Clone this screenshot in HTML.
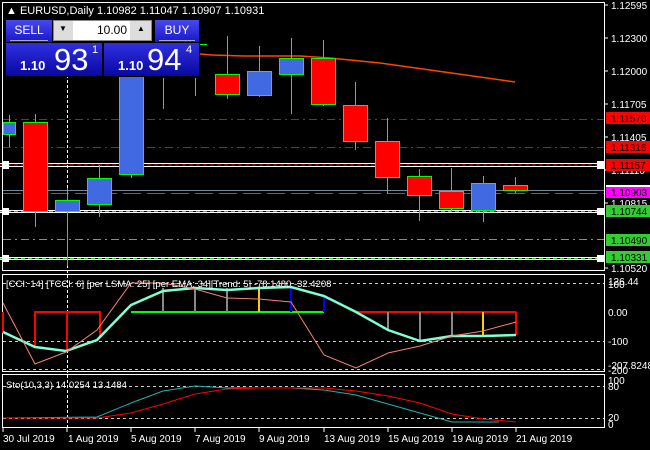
<!DOCTYPE html>
<html><head><meta charset="utf-8"><style>
body{margin:0;background:#000;width:650px;height:450px;overflow:hidden;font-family:"Liberation Sans",sans-serif}
svg{position:absolute;left:0;top:0}
text{font-family:"Liberation Sans",sans-serif;font-size:10px;fill:#fff}
.btn{position:absolute;background:linear-gradient(#4848f0,#1818c8);color:#fff;font-family:"Liberation Sans",sans-serif;border:1px solid #000}
</style></head><body>
<svg width="650" height="450" viewBox="0 0 650 450">
<!-- frames -->
<rect x="2.5" y="2.5" width="602" height="268" fill="none" stroke="#fff"/>
<rect x="2.5" y="274.5" width="602" height="97" fill="none" stroke="#fff"/>
<rect x="2.5" y="374.5" width="602" height="53" fill="none" stroke="#fff"/>
<!-- horizontal levels main -->
<g stroke-width="1">
<line x1="3" y1="119.5" x2="604" y2="119.5" stroke="#e00" stroke-dasharray="8,4,2,4"/>
<line x1="3" y1="147.5" x2="604" y2="147.5" stroke="#e00" stroke-dasharray="8,4,2,4"/>
<line x1="0" y1="163.5" x2="604" y2="163.5" stroke="#fff"/>
<line x1="0" y1="165" x2="604" y2="165" stroke="#e00" stroke-dasharray="4,3"/>
<line x1="0" y1="166.5" x2="604" y2="166.5" stroke="#fff"/>
<line x1="3" y1="190.5" x2="604" y2="190.5" stroke="#778899"/>
<line x1="3" y1="193.5" x2="604" y2="193.5" stroke="#e0e" stroke-dasharray="18,6"/>
<line x1="0" y1="210.5" x2="604" y2="210.5" stroke="#fff"/>
<line x1="0" y1="211.5" x2="604" y2="211.5" stroke="#3c3" stroke-dasharray="4,3"/>
<line x1="0" y1="212.5" x2="604" y2="212.5" stroke="#fff"/>
<line x1="3" y1="239.5" x2="604" y2="239.5" stroke="#3c3" stroke-dasharray="8,4,2,4"/>
<line x1="0" y1="257.5" x2="604" y2="257.5" stroke="#fff"/>
<line x1="0" y1="258.5" x2="604" y2="258.5" stroke="#3c3" stroke-dasharray="4,3"/>
<line x1="0" y1="259.5" x2="604" y2="259.5" stroke="#fff"/>
</g>
<g fill="#fff"><rect x="2" y="161" width="7" height="8"/><rect x="2" y="208" width="7" height="7"/><rect x="2" y="255" width="7" height="7"/>
<rect x="597" y="161" width="8" height="8"/><rect x="597" y="208" width="8" height="7"/><rect x="597" y="255" width="8" height="7"/></g>
<!-- vertical dashed -->
<line x1="67.5" y1="50" x2="67.5" y2="430" stroke="#fff" stroke-dasharray="3,2"/>
<!-- MA line -->
<polyline points="200,54 212,55 244,56 300,56 330,58 380,63 430,70 480,77 515,82" fill="none" stroke="#f40" stroke-width="1.5"/>
<!-- candles wicks -->
<g stroke="#0f0" stroke-width="1">
<line x1="9.5" y1="115" x2="9.5" y2="147"/><line x1="35.5" y1="114" x2="35.5" y2="227"/><line x1="67.5" y1="188" x2="67.5" y2="266"/>
<line x1="99.5" y1="165" x2="99.5" y2="217"/><line x1="131.5" y1="70" x2="131.5" y2="178"/><line x1="163.5" y1="78" x2="163.5" y2="109"/>
<line x1="195.5" y1="78" x2="195.5" y2="96"/><line x1="227.5" y1="36" x2="227.5" y2="99"/><line x1="259.5" y1="46" x2="259.5" y2="97"/>
<line x1="291.5" y1="38" x2="291.5" y2="114"/><line x1="323.5" y1="40" x2="323.5" y2="106"/><line x1="355.5" y1="82" x2="355.5" y2="150"/>
<line x1="387.5" y1="118" x2="387.5" y2="194"/><line x1="419.5" y1="169" x2="419.5" y2="221"/><line x1="451.5" y1="168" x2="451.5" y2="211"/>
<line x1="483.5" y1="176" x2="483.5" y2="222"/><line x1="515.5" y1="177" x2="515.5" y2="193"/>
<line x1="200" y1="44.5" x2="207" y2="44.5"/>
</g>
<g stroke="#0f0" stroke-width="1">
<rect x="3.5" y="122.5" width="12" height="12" fill="#4169e1"/>
<rect x="23.5" y="122.5" width="24" height="89" fill="#f00"/>
<rect x="55.5" y="200.5" width="24" height="11" fill="#4169e1"/>
<rect x="87.5" y="178.5" width="24" height="26" fill="#4169e1"/>
<rect x="119.5" y="70.5" width="24" height="104" fill="#4169e1"/>
<rect x="215.5" y="74.5" width="24" height="20" fill="#f00"/>
<rect x="247.5" y="71.5" width="24" height="24" fill="#4169e1"/>
<rect x="279.5" y="58.5" width="24" height="16" fill="#4169e1"/>
<rect x="311.5" y="58.5" width="24" height="46" fill="#f00"/>
<rect x="343.5" y="105.5" width="24" height="36" fill="#f00"/>
<rect x="375.5" y="141.5" width="24" height="36" fill="#f00"/>
<rect x="407.5" y="176.5" width="24" height="19" fill="#f00"/>
<rect x="439.5" y="191.5" width="24" height="17" fill="#f00"/>
<rect x="471.5" y="183.5" width="24" height="27" fill="#4169e1"/>
<rect x="503.5" y="185.5" width="24" height="5" fill="#f00"/>
</g>
<!-- price axis -->
<g stroke="#fff"><line x1="604" y1="5" x2="608" y2="5"/><line x1="604" y1="38" x2="608" y2="38"/><line x1="604" y1="71" x2="608" y2="71"/><line x1="604" y1="104" x2="608" y2="104"/><line x1="604" y1="137" x2="608" y2="137"/><line x1="604" y1="170" x2="608" y2="170"/><line x1="604" y1="203" x2="608" y2="203"/><line x1="604" y1="268" x2="608" y2="268"/></g>
<g><text x="611" y="9">1.12595</text><text x="611" y="42">1.12300</text><text x="611" y="75">1.12000</text><text x="611" y="108">1.11705</text><text x="611" y="141">1.11405</text><text x="611" y="174">1.11110</text><text x="611" y="207">1.10815</text><text x="611" y="272">1.10520</text></g>
<rect x="606" y="112" width="44" height="12" fill="#f00"/><text x="611" y="122" style="fill:#000">1.11570</text>
<rect x="606" y="141" width="44" height="12" fill="#f00"/><text x="611" y="151" style="fill:#000">1.11316</text>
<rect x="606" y="159" width="44" height="12" fill="#f00"/><text x="611" y="169" style="fill:#000">1.11157</text>
<rect x="606" y="185" width="44" height="2" fill="#fff"/>
<rect x="606" y="187" width="44" height="11" fill="#f0f"/><text x="611" y="196" style="fill:#000">1.10903</text>
<rect x="606" y="205" width="44" height="12" fill="#32cd32"/><text x="611" y="215" style="fill:#000">1.10744</text>
<rect x="606" y="234" width="44" height="12" fill="#32cd32"/><text x="611" y="244" style="fill:#000">1.10490</text>
<rect x="606" y="251" width="44" height="12" fill="#32cd32"/><text x="611" y="261" style="fill:#000">1.10331</text>
<!-- title -->
<text x="6" y="14" style="font-size:11px">▲ EURUSD,Daily  1.10982 1.11047 1.10907 1.10931</text>
<!-- CCI panel -->
<g stroke="#ccc" stroke-dasharray="3,3"><line x1="3" y1="283.5" x2="604" y2="283.5"/><line x1="3" y1="341.5" x2="604" y2="341.5"/><line x1="3" y1="369.5" x2="604" y2="369.5"/>
<line x1="3" y1="386.5" x2="604" y2="386.5"/><line x1="3" y1="418.5" x2="604" y2="418.5"/></g>
<g stroke-width="2" fill="none">
<polyline points="3,312 3,333" stroke="#f00"/>
<polyline points="35,346 35,312 100,312 100,337" stroke="#f00"/>
<line x1="67" y1="312" x2="67" y2="351" stroke="#f00"/>
<line x1="131" y1="312" x2="324" y2="312" stroke="#0f0"/>
<line x1="163" y1="288" x2="163" y2="312" stroke="#888"/><line x1="195" y1="287" x2="195" y2="312" stroke="#888"/><line x1="227" y1="288" x2="227" y2="312" stroke="#888"/>
<line x1="259" y1="287" x2="259" y2="312" stroke="#fc0"/><line x1="291" y1="288" x2="291" y2="312" stroke="#00f"/><line x1="324" y1="296" x2="324" y2="312" stroke="#00f"/>
<line x1="356" y1="312" x2="516" y2="312" stroke="#f00"/>
<line x1="388" y1="312" x2="388" y2="330" stroke="#888"/><line x1="420" y1="312" x2="420" y2="341" stroke="#888"/><line x1="452" y1="312" x2="452" y2="337" stroke="#888"/>
<line x1="483" y1="312" x2="483" y2="336" stroke="#fc0"/><line x1="516" y1="312" x2="516" y2="335" stroke="#f00"/>
<polyline points="3,332 35,347 66,351 97,340 131,305 163,291 195,288 227,290 259,288 291,287 324,296 356,312 388,330 420,341 452,336 483,336 516,335" stroke="#7fffd4" stroke-width="2.5"/>
<polyline points="3,303 35,364 66,352 97,330 131,283 163,283 195,289 227,298 259,299 291,302 324,355 356,368 388,353 420,346 452,336 483,331 516,322" stroke="#fa8072" stroke-width="1"/>
<!-- sto -->
<polyline points="3,418 97,417 131,403 163,391 195,386 227,388 259,388 291,388 324,390 356,395 388,404 420,413 452,422 483,422 499,422" stroke="#20b2aa" stroke-width="1"/>
<polyline points="3,418 97,418 131,413 163,404 195,394 227,389 259,388 291,388 324,388 356,391 388,396 420,403 452,414 483,419 516,422" stroke="#f00" stroke-width="1"/>
</g>
<text x="6" y="287" style="font-size:9.5px">[CCI: 14] [TCCI: 6] [per LSMA: 25] [per EMA: 34][Trend: 5] -78.1480 -32.4208</text>
<text x="6" y="388" style="font-size:9.5px">Sto(10,3,3) 14.0254 13.1484</text>
<g style="font-size:9.5px"><text x="608" y="285">126.44</text><text x="608" y="288">100</text><text x="608" y="316">0.00</text><text x="608" y="345">-100</text><text x="608" y="369">-207.8248</text><text x="608" y="374">-200</text>
<text x="608" y="384">100</text><text x="608" y="390">80</text><text x="608" y="421">20</text><text x="608" y="428">0</text></g>
<!-- dates -->
<g stroke="#fff"><line x1="3" y1="428" x2="3" y2="432"/><line x1="67" y1="428" x2="67" y2="432"/><line x1="131" y1="428" x2="131" y2="432"/><line x1="195" y1="428" x2="195" y2="432"/><line x1="259" y1="428" x2="259" y2="432"/><line x1="324" y1="428" x2="324" y2="432"/><line x1="388" y1="428" x2="388" y2="432"/><line x1="452" y1="428" x2="452" y2="432"/><line x1="516" y1="428" x2="516" y2="432"/></g>
<g><text x="3" y="442">30 Jul 2019</text><text x="68" y="442">1 Aug 2019</text><text x="131" y="442">5 Aug 2019</text><text x="195" y="442">7 Aug 2019</text><text x="259" y="442">9 Aug 2019</text><text x="324" y="442">13 Aug 2019</text><text x="388" y="442">15 Aug 2019</text><text x="452" y="442">19 Aug 2019</text><text x="516" y="442">21 Aug 2019</text></g>
</svg>
<!-- trade panel -->
<div class="btn" style="left:5px;top:19px;width:46px;height:22px;font-size:12px;text-align:center;line-height:21px">SELL<div style="position:absolute;left:4px;right:4px;bottom:1px;height:1px;background:#aab"></div></div>
<div style="position:absolute;left:53px;top:20px;width:99px;height:21px;background:#ddd;border:1px solid #888;box-sizing:border-box">
<div style="position:absolute;left:19px;top:0;width:57px;height:19px;background:#fff;font-size:12px;text-align:right;line-height:19px;padding-right:3px;box-sizing:border-box">10.00</div>
<div style="position:absolute;left:5px;top:3px;font-size:8px">▼</div><div style="position:absolute;left:83px;top:3px;font-size:8px">▲</div></div>
<div class="btn" style="left:154px;top:19px;width:44px;height:22px;font-size:12px;text-align:center;line-height:21px">BUY<div style="position:absolute;left:4px;right:4px;bottom:1px;height:1px;background:#aab"></div></div>
<div class="btn" style="left:5px;top:42px;width:96px;height:33px;background:linear-gradient(#3030e0,#0808a0)">
<span style="position:absolute;left:14px;top:15px;font-size:13px;font-weight:bold">1.10</span>
<span style="position:absolute;left:48px;top:-1px;font-size:31px">93</span>
<span style="position:absolute;left:86px;top:1px;font-size:11px">1</span></div>
<div class="btn" style="left:103px;top:42px;width:95px;height:33px;background:linear-gradient(#3030e0,#0808a0)">
<span style="position:absolute;left:14px;top:15px;font-size:13px;font-weight:bold">1.10</span>
<span style="position:absolute;left:43px;top:-1px;font-size:31px">94</span>
<span style="position:absolute;left:82px;top:1px;font-size:11px">4</span></div>
</body></html>
